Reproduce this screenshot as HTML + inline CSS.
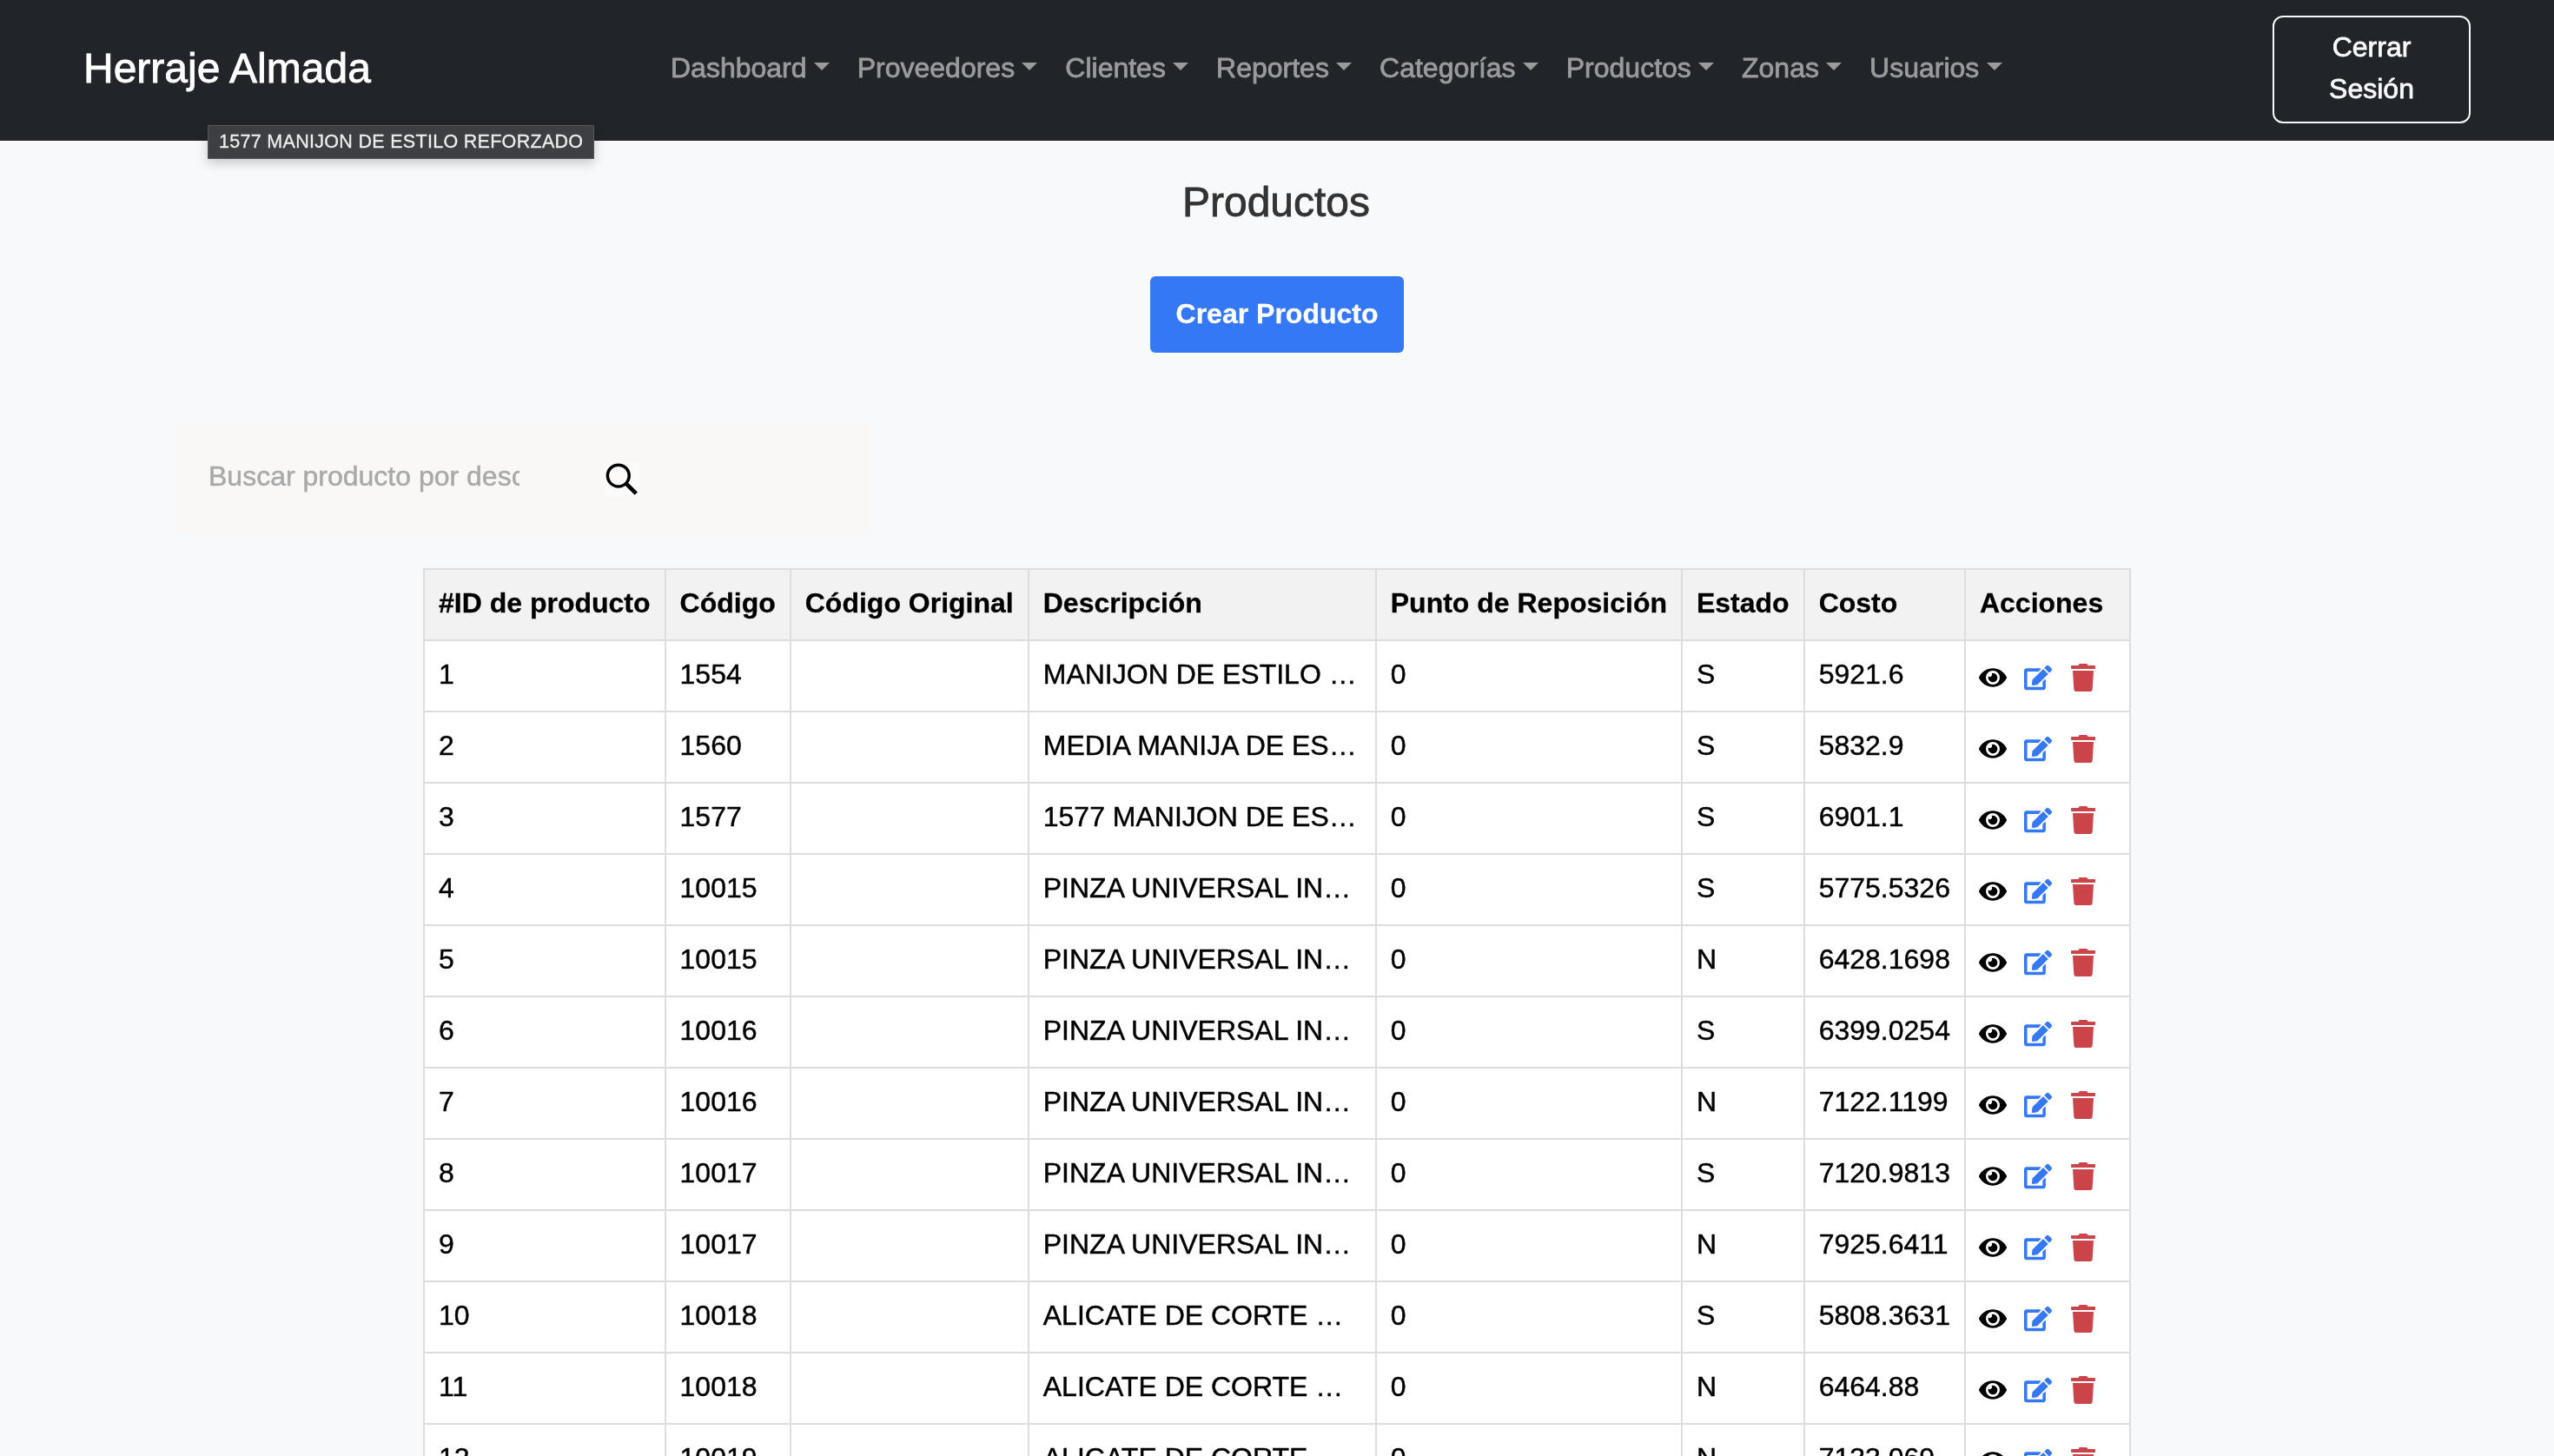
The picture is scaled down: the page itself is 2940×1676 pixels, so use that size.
<!DOCTYPE html>
<html lang="es"><head><meta charset="utf-8"><title>Herraje Almada - Productos</title>
<style>
*{box-sizing:border-box}
html,body{margin:0;padding:0}
body{width:2940px;height:1676px;overflow:hidden;background:#f8f9fa;font-family:"Liberation Sans",Arial,Helvetica,sans-serif;font-size:32px;line-height:48px;color:#000;position:relative;-webkit-text-stroke:0.8px}
nav{position:absolute;left:0;top:0;width:2940px;height:162px;background:#212529}
.brand{position:absolute;left:96px;top:43px;font-size:48px;line-height:72px;color:#fff;white-space:nowrap}
.links{position:absolute;left:756px;top:54.4px;display:flex;white-space:nowrap}
.nl{padding:0 16px;color:#9a9b9d;display:block}
.nl::after{content:"";display:inline-block;margin-left:8.16px;vertical-align:8.16px;border-top:9.6px solid;border-right:9.6px solid transparent;border-left:9.6px solid transparent;border-bottom:0}
.logout{position:absolute;left:2616px;top:18px;width:228px;height:124px;border:2px solid #f8f9fa;border-radius:12px;color:#f8f9fa;text-align:center;padding:10.4px 0 0;line-height:48px}
.tip{position:absolute;left:239px;top:144px;width:445px;height:39px;background:#3e3f43;border:1px solid #56575b;color:#eeeeee;font-size:21.5px;letter-spacing:0.3px;line-height:37px;padding-left:12px;white-space:nowrap;box-shadow:0 5px 12px rgba(0,0,0,.2);z-index:5;-webkit-text-stroke:0.3px}
h1{position:absolute;left:-1px;top:197px;width:2940px;margin:0;text-align:center;font-size:48px;line-height:72px;font-weight:400;color:#333}
.create{position:absolute;left:1324px;top:318px;width:292px;height:88px;background:#3578f6;border-radius:6px;color:#fff;font-weight:700;text-align:center;line-height:86px;-webkit-text-stroke:0.3px;white-space:nowrap}
.search{position:absolute;left:200px;top:486px;width:800px;height:128px;background:#f9f8f7;border-radius:1px}
.ph{position:absolute;left:40px;top:38px;-webkit-text-stroke:0.5px;width:358px;overflow:hidden;white-space:nowrap;color:#a9a9a9}
.sicon{position:absolute;left:496px;top:46px;width:40px;height:40px;background:conic-gradient(rgba(255,255,255,.75) 25%,transparent 0 50%,rgba(255,255,255,.75) 0 75%,transparent 0) 0 0/4px 4px}
table{position:absolute;left:487px;top:654px;border-collapse:collapse;white-space:nowrap}
th,td{border:2px solid #ddd;padding:13.5px 16px 18.5px;text-align:left;height:82px;line-height:48px}
th{background:#f2f2f2;font-weight:700;-webkit-text-stroke:0.3px}
td{background:#fff;-webkit-text-stroke:0.45px}
.desc{width:400px;max-width:400px;overflow:hidden;text-overflow:ellipsis}
.ic{width:32px;height:32px;margin-right:20px;vertical-align:middle;display:inline-block;position:relative;top:4px;left:-1px}
.acc{font-size:0}
#wrap{position:absolute;left:0;top:0;width:2940px;height:1676px;overflow:hidden;will-change:transform}
</style></head><body><div id="wrap">
<nav>
<div class="brand">Herraje Almada</div>
<div class="links"><a class="nl">Dashboard</a><a class="nl">Proveedores</a><a class="nl">Clientes</a><a class="nl">Reportes</a><a class="nl">Categorías</a><a class="nl">Productos</a><a class="nl">Zonas</a><a class="nl">Usuarios</a></div>
<div class="logout">Cerrar<br>Sesión</div>
</nav>
<div class="tip">1577 MANIJON DE ESTILO REFORZADO</div>
<h1>Productos</h1>
<div class="create">Crear Producto</div>
<div class="search"><div class="ph">Buscar producto por descripción</div>
<svg class="sicon" viewBox="0 0 40 40"><circle cx="15.8" cy="15.6" r="12.4" fill="none" stroke="#000" stroke-width="3.5"/><path d="M24 23.8L36.3 36.1" stroke="#000" stroke-width="4.7" fill="none"/></svg></div>
<table><thead><tr><th>#ID de producto</th><th>Código</th><th>Código Original</th><th>Descripción</th><th>Punto de Reposición</th><th>Estado</th><th>Costo</th><th>Acciones</th></tr></thead>
<tbody>
<tr><td>1</td><td>1554</td><td></td><td class="desc">MANIJON DE ESTILO REFORZADO</td><td>0</td><td>S</td><td>5921.6</td><td class="acc"><svg class="ic" viewBox="0 0 576 512" fill="#000"><path d="M572.52 241.4C518.29 135.59 410.93 64 288 64S57.68 135.64 3.48 241.41a32.35 32.35 0 0 0 0 29.19C57.71 376.41 165.07 448 288 448s230.32-71.64 284.52-177.41a32.35 32.35 0 0 0 0-29.19zM288 400a144 144 0 1 1 144-144 143.93 143.93 0 0 1-144 144zm0-240a95.31 95.31 0 0 0-25.31 3.79 47.85 47.85 0 0 1-66.9 66.9A95.78 95.78 0 1 0 288 160z"/></svg><svg class="ic" viewBox="0 0 576 512" fill="#3578f6"><path d="M402.6 83.2l90.2 90.2c3.8 3.8 3.8 10 0 13.8L274.4 405.600l-92.800 10.300c-12.400 1.400-22.900-9.100-21.500-21.500l10.300-92.800L388.800 83.200c3.800-3.800 10-3.800 13.800 0zm162-22.900l-48.800-48.800c-15.200-15.200-39.900-15.200-55.200 0l-35.400 35.400c-3.800 3.800-3.800 10 0 13.800l90.200 90.200c3.800 3.800 10 3.800 13.800 0l35.400-35.400c15.200-15.300 15.200-40 0-55.200zM384 346.200V448H64V128h229.800c3.200 0 6.200-1.300 8.500-3.500l40-40c7.600-7.600 2.200-20.500-8.500-20.500H48C21.500 64 0 85.500 0 112v352c0 26.500 21.500 48 48 48h352c26.500 0 48-21.500 48-48V306.200c0-10.700-12.900-16-20.500-8.500l-40 40c-2.200 2.300-3.500 5.300-3.500 8.500z"/></svg><svg class="ic" viewBox="0 0 448 512" fill="#cb444a"><path d="M432 32H312l-9.400-18.700A24 24 0 0 0 281.100 0H166.800a23.720 23.720 0 0 0-21.400 13.300L136 32H16A16 16 0 0 0 0 48v32a16 16 0 0 0 16 16h416a16 16 0 0 0 16-16V48a16 16 0 0 0-16-16zM53.200 467a48 48 0 0 0 47.900 45h245.800a48 48 0 0 0 47.900-45L416 128H32z"/></svg></td></tr>
<tr><td>2</td><td>1560</td><td></td><td class="desc">MEDIA MANIJA DE ESTILO REFORZADO</td><td>0</td><td>S</td><td>5832.9</td><td class="acc"><svg class="ic" viewBox="0 0 576 512" fill="#000"><path d="M572.52 241.4C518.29 135.59 410.93 64 288 64S57.68 135.64 3.48 241.41a32.35 32.35 0 0 0 0 29.19C57.71 376.41 165.07 448 288 448s230.32-71.64 284.52-177.41a32.35 32.35 0 0 0 0-29.19zM288 400a144 144 0 1 1 144-144 143.93 143.93 0 0 1-144 144zm0-240a95.31 95.31 0 0 0-25.31 3.79 47.85 47.85 0 0 1-66.9 66.9A95.78 95.78 0 1 0 288 160z"/></svg><svg class="ic" viewBox="0 0 576 512" fill="#3578f6"><path d="M402.6 83.2l90.2 90.2c3.8 3.8 3.8 10 0 13.8L274.4 405.600l-92.800 10.300c-12.400 1.400-22.900-9.100-21.500-21.500l10.300-92.800L388.800 83.200c3.800-3.800 10-3.800 13.800 0zm162-22.900l-48.800-48.800c-15.200-15.200-39.900-15.200-55.200 0l-35.400 35.400c-3.800 3.800-3.800 10 0 13.800l90.200 90.200c3.800 3.800 10 3.800 13.800 0l35.400-35.400c15.200-15.300 15.200-40 0-55.200zM384 346.200V448H64V128h229.800c3.200 0 6.200-1.300 8.500-3.500l40-40c7.600-7.600 2.200-20.500-8.500-20.500H48C21.500 64 0 85.500 0 112v352c0 26.500 21.500 48 48 48h352c26.500 0 48-21.500 48-48V306.200c0-10.700-12.900-16-20.500-8.500l-40 40c-2.200 2.300-3.500 5.300-3.500 8.500z"/></svg><svg class="ic" viewBox="0 0 448 512" fill="#cb444a"><path d="M432 32H312l-9.400-18.700A24 24 0 0 0 281.100 0H166.800a23.720 23.720 0 0 0-21.400 13.300L136 32H16A16 16 0 0 0 0 48v32a16 16 0 0 0 16 16h416a16 16 0 0 0 16-16V48a16 16 0 0 0-16-16zM53.200 467a48 48 0 0 0 47.900 45h245.800a48 48 0 0 0 47.900-45L416 128H32z"/></svg></td></tr>
<tr><td>3</td><td>1577</td><td></td><td class="desc">1577 MANIJON DE ESTILO REFORZADO</td><td>0</td><td>S</td><td>6901.1</td><td class="acc"><svg class="ic" viewBox="0 0 576 512" fill="#000"><path d="M572.52 241.4C518.29 135.59 410.93 64 288 64S57.68 135.64 3.48 241.41a32.35 32.35 0 0 0 0 29.19C57.71 376.41 165.07 448 288 448s230.32-71.64 284.52-177.41a32.35 32.35 0 0 0 0-29.19zM288 400a144 144 0 1 1 144-144 143.93 143.93 0 0 1-144 144zm0-240a95.31 95.31 0 0 0-25.31 3.79 47.85 47.85 0 0 1-66.9 66.9A95.78 95.78 0 1 0 288 160z"/></svg><svg class="ic" viewBox="0 0 576 512" fill="#3578f6"><path d="M402.6 83.2l90.2 90.2c3.8 3.8 3.8 10 0 13.8L274.4 405.600l-92.800 10.300c-12.400 1.400-22.900-9.100-21.500-21.500l10.300-92.800L388.800 83.200c3.800-3.800 10-3.800 13.800 0zm162-22.900l-48.800-48.800c-15.200-15.200-39.900-15.200-55.200 0l-35.400 35.400c-3.800 3.800-3.800 10 0 13.800l90.200 90.200c3.800 3.800 10 3.800 13.800 0l35.400-35.400c15.200-15.300 15.200-40 0-55.200zM384 346.200V448H64V128h229.800c3.200 0 6.200-1.300 8.500-3.500l40-40c7.600-7.600 2.200-20.500-8.500-20.500H48C21.500 64 0 85.500 0 112v352c0 26.500 21.500 48 48 48h352c26.500 0 48-21.500 48-48V306.200c0-10.700-12.900-16-20.500-8.500l-40 40c-2.200 2.300-3.500 5.300-3.500 8.500z"/></svg><svg class="ic" viewBox="0 0 448 512" fill="#cb444a"><path d="M432 32H312l-9.400-18.700A24 24 0 0 0 281.100 0H166.800a23.720 23.720 0 0 0-21.400 13.300L136 32H16A16 16 0 0 0 0 48v32a16 16 0 0 0 16 16h416a16 16 0 0 0 16-16V48a16 16 0 0 0-16-16zM53.200 467a48 48 0 0 0 47.900 45h245.800a48 48 0 0 0 47.900-45L416 128H32z"/></svg></td></tr>
<tr><td>4</td><td>10015</td><td></td><td class="desc">PINZA UNIVERSAL INDUSTRIAL 6&quot;</td><td>0</td><td>S</td><td>5775.5326</td><td class="acc"><svg class="ic" viewBox="0 0 576 512" fill="#000"><path d="M572.52 241.4C518.29 135.59 410.93 64 288 64S57.68 135.64 3.48 241.41a32.35 32.35 0 0 0 0 29.19C57.71 376.41 165.07 448 288 448s230.32-71.64 284.52-177.41a32.35 32.35 0 0 0 0-29.19zM288 400a144 144 0 1 1 144-144 143.93 143.93 0 0 1-144 144zm0-240a95.31 95.31 0 0 0-25.31 3.79 47.85 47.85 0 0 1-66.9 66.9A95.78 95.78 0 1 0 288 160z"/></svg><svg class="ic" viewBox="0 0 576 512" fill="#3578f6"><path d="M402.6 83.2l90.2 90.2c3.8 3.8 3.8 10 0 13.8L274.4 405.600l-92.800 10.300c-12.400 1.400-22.900-9.100-21.500-21.500l10.300-92.800L388.800 83.200c3.800-3.800 10-3.800 13.800 0zm162-22.900l-48.800-48.800c-15.200-15.200-39.900-15.200-55.200 0l-35.400 35.400c-3.800 3.800-3.800 10 0 13.800l90.200 90.200c3.800 3.800 10 3.800 13.800 0l35.400-35.400c15.200-15.300 15.200-40 0-55.200zM384 346.200V448H64V128h229.800c3.200 0 6.200-1.300 8.500-3.500l40-40c7.600-7.600 2.200-20.500-8.500-20.500H48C21.500 64 0 85.500 0 112v352c0 26.500 21.500 48 48 48h352c26.500 0 48-21.500 48-48V306.200c0-10.700-12.900-16-20.500-8.500l-40 40c-2.200 2.300-3.500 5.300-3.500 8.500z"/></svg><svg class="ic" viewBox="0 0 448 512" fill="#cb444a"><path d="M432 32H312l-9.400-18.700A24 24 0 0 0 281.100 0H166.800a23.720 23.720 0 0 0-21.400 13.300L136 32H16A16 16 0 0 0 0 48v32a16 16 0 0 0 16 16h416a16 16 0 0 0 16-16V48a16 16 0 0 0-16-16zM53.200 467a48 48 0 0 0 47.900 45h245.800a48 48 0 0 0 47.900-45L416 128H32z"/></svg></td></tr>
<tr><td>5</td><td>10015</td><td></td><td class="desc">PINZA UNIVERSAL INDUSTRIAL 6&quot;</td><td>0</td><td>N</td><td>6428.1698</td><td class="acc"><svg class="ic" viewBox="0 0 576 512" fill="#000"><path d="M572.52 241.4C518.29 135.59 410.93 64 288 64S57.68 135.64 3.48 241.41a32.35 32.35 0 0 0 0 29.19C57.71 376.41 165.07 448 288 448s230.32-71.64 284.52-177.41a32.35 32.35 0 0 0 0-29.19zM288 400a144 144 0 1 1 144-144 143.93 143.93 0 0 1-144 144zm0-240a95.31 95.31 0 0 0-25.31 3.79 47.85 47.85 0 0 1-66.9 66.9A95.78 95.78 0 1 0 288 160z"/></svg><svg class="ic" viewBox="0 0 576 512" fill="#3578f6"><path d="M402.6 83.2l90.2 90.2c3.8 3.8 3.8 10 0 13.8L274.4 405.600l-92.800 10.300c-12.400 1.400-22.900-9.100-21.500-21.500l10.300-92.800L388.800 83.200c3.800-3.800 10-3.800 13.800 0zm162-22.900l-48.800-48.800c-15.200-15.200-39.900-15.200-55.200 0l-35.400 35.400c-3.800 3.800-3.800 10 0 13.800l90.200 90.200c3.800 3.800 10 3.800 13.800 0l35.400-35.400c15.200-15.300 15.200-40 0-55.200zM384 346.200V448H64V128h229.800c3.200 0 6.200-1.300 8.500-3.500l40-40c7.600-7.600 2.200-20.500-8.500-20.500H48C21.500 64 0 85.500 0 112v352c0 26.500 21.500 48 48 48h352c26.500 0 48-21.500 48-48V306.200c0-10.700-12.900-16-20.500-8.500l-40 40c-2.200 2.300-3.500 5.300-3.500 8.500z"/></svg><svg class="ic" viewBox="0 0 448 512" fill="#cb444a"><path d="M432 32H312l-9.400-18.700A24 24 0 0 0 281.100 0H166.800a23.720 23.720 0 0 0-21.400 13.300L136 32H16A16 16 0 0 0 0 48v32a16 16 0 0 0 16 16h416a16 16 0 0 0 16-16V48a16 16 0 0 0-16-16zM53.200 467a48 48 0 0 0 47.900 45h245.800a48 48 0 0 0 47.900-45L416 128H32z"/></svg></td></tr>
<tr><td>6</td><td>10016</td><td></td><td class="desc">PINZA UNIVERSAL INDUSTRIAL 7&quot;</td><td>0</td><td>S</td><td>6399.0254</td><td class="acc"><svg class="ic" viewBox="0 0 576 512" fill="#000"><path d="M572.52 241.4C518.29 135.59 410.93 64 288 64S57.68 135.64 3.48 241.41a32.35 32.35 0 0 0 0 29.19C57.71 376.41 165.07 448 288 448s230.32-71.64 284.52-177.41a32.35 32.35 0 0 0 0-29.19zM288 400a144 144 0 1 1 144-144 143.93 143.93 0 0 1-144 144zm0-240a95.31 95.31 0 0 0-25.31 3.79 47.85 47.85 0 0 1-66.9 66.9A95.78 95.78 0 1 0 288 160z"/></svg><svg class="ic" viewBox="0 0 576 512" fill="#3578f6"><path d="M402.6 83.2l90.2 90.2c3.8 3.8 3.8 10 0 13.8L274.4 405.600l-92.800 10.300c-12.400 1.400-22.900-9.100-21.500-21.500l10.300-92.800L388.800 83.200c3.800-3.800 10-3.800 13.800 0zm162-22.900l-48.800-48.800c-15.200-15.200-39.900-15.200-55.200 0l-35.400 35.400c-3.800 3.800-3.800 10 0 13.800l90.200 90.200c3.800 3.800 10 3.800 13.800 0l35.400-35.400c15.200-15.300 15.200-40 0-55.200zM384 346.200V448H64V128h229.800c3.200 0 6.200-1.300 8.500-3.500l40-40c7.600-7.600 2.200-20.500-8.500-20.500H48C21.500 64 0 85.500 0 112v352c0 26.500 21.500 48 48 48h352c26.500 0 48-21.500 48-48V306.200c0-10.700-12.900-16-20.500-8.500l-40 40c-2.200 2.300-3.500 5.300-3.500 8.500z"/></svg><svg class="ic" viewBox="0 0 448 512" fill="#cb444a"><path d="M432 32H312l-9.400-18.700A24 24 0 0 0 281.100 0H166.800a23.720 23.720 0 0 0-21.400 13.300L136 32H16A16 16 0 0 0 0 48v32a16 16 0 0 0 16 16h416a16 16 0 0 0 16-16V48a16 16 0 0 0-16-16zM53.200 467a48 48 0 0 0 47.900 45h245.800a48 48 0 0 0 47.900-45L416 128H32z"/></svg></td></tr>
<tr><td>7</td><td>10016</td><td></td><td class="desc">PINZA UNIVERSAL INDUSTRIAL 7&quot;</td><td>0</td><td>N</td><td>7122.1199</td><td class="acc"><svg class="ic" viewBox="0 0 576 512" fill="#000"><path d="M572.52 241.4C518.29 135.59 410.93 64 288 64S57.68 135.64 3.48 241.41a32.35 32.35 0 0 0 0 29.19C57.71 376.41 165.07 448 288 448s230.32-71.64 284.52-177.41a32.35 32.35 0 0 0 0-29.19zM288 400a144 144 0 1 1 144-144 143.93 143.93 0 0 1-144 144zm0-240a95.31 95.31 0 0 0-25.31 3.79 47.85 47.85 0 0 1-66.9 66.9A95.78 95.78 0 1 0 288 160z"/></svg><svg class="ic" viewBox="0 0 576 512" fill="#3578f6"><path d="M402.6 83.2l90.2 90.2c3.8 3.8 3.8 10 0 13.8L274.4 405.600l-92.800 10.300c-12.400 1.400-22.900-9.100-21.500-21.500l10.300-92.800L388.800 83.200c3.800-3.800 10-3.800 13.800 0zm162-22.900l-48.800-48.800c-15.200-15.200-39.900-15.200-55.200 0l-35.400 35.400c-3.800 3.800-3.800 10 0 13.800l90.200 90.200c3.800 3.800 10 3.800 13.800 0l35.400-35.400c15.200-15.300 15.200-40 0-55.200zM384 346.200V448H64V128h229.800c3.200 0 6.200-1.300 8.500-3.500l40-40c7.600-7.600 2.200-20.500-8.500-20.500H48C21.500 64 0 85.500 0 112v352c0 26.500 21.500 48 48 48h352c26.500 0 48-21.500 48-48V306.200c0-10.700-12.900-16-20.500-8.500l-40 40c-2.200 2.300-3.500 5.300-3.500 8.500z"/></svg><svg class="ic" viewBox="0 0 448 512" fill="#cb444a"><path d="M432 32H312l-9.400-18.700A24 24 0 0 0 281.100 0H166.800a23.720 23.720 0 0 0-21.400 13.300L136 32H16A16 16 0 0 0 0 48v32a16 16 0 0 0 16 16h416a16 16 0 0 0 16-16V48a16 16 0 0 0-16-16zM53.200 467a48 48 0 0 0 47.900 45h245.800a48 48 0 0 0 47.900-45L416 128H32z"/></svg></td></tr>
<tr><td>8</td><td>10017</td><td></td><td class="desc">PINZA UNIVERSAL INDUSTRIAL 8&quot;</td><td>0</td><td>S</td><td>7120.9813</td><td class="acc"><svg class="ic" viewBox="0 0 576 512" fill="#000"><path d="M572.52 241.4C518.29 135.59 410.93 64 288 64S57.68 135.64 3.48 241.41a32.35 32.35 0 0 0 0 29.19C57.71 376.41 165.07 448 288 448s230.32-71.64 284.52-177.41a32.35 32.35 0 0 0 0-29.19zM288 400a144 144 0 1 1 144-144 143.93 143.93 0 0 1-144 144zm0-240a95.31 95.31 0 0 0-25.31 3.79 47.85 47.85 0 0 1-66.9 66.9A95.78 95.78 0 1 0 288 160z"/></svg><svg class="ic" viewBox="0 0 576 512" fill="#3578f6"><path d="M402.6 83.2l90.2 90.2c3.8 3.8 3.8 10 0 13.8L274.4 405.600l-92.800 10.300c-12.400 1.400-22.900-9.100-21.500-21.500l10.300-92.800L388.800 83.200c3.800-3.800 10-3.800 13.800 0zm162-22.900l-48.800-48.800c-15.200-15.200-39.900-15.200-55.200 0l-35.400 35.400c-3.800 3.800-3.800 10 0 13.800l90.200 90.200c3.800 3.800 10 3.800 13.800 0l35.400-35.400c15.200-15.300 15.200-40 0-55.200zM384 346.200V448H64V128h229.800c3.200 0 6.200-1.300 8.500-3.500l40-40c7.600-7.600 2.200-20.500-8.500-20.500H48C21.500 64 0 85.500 0 112v352c0 26.500 21.500 48 48 48h352c26.500 0 48-21.500 48-48V306.200c0-10.700-12.900-16-20.500-8.500l-40 40c-2.200 2.300-3.500 5.300-3.500 8.500z"/></svg><svg class="ic" viewBox="0 0 448 512" fill="#cb444a"><path d="M432 32H312l-9.400-18.700A24 24 0 0 0 281.100 0H166.800a23.720 23.720 0 0 0-21.400 13.300L136 32H16A16 16 0 0 0 0 48v32a16 16 0 0 0 16 16h416a16 16 0 0 0 16-16V48a16 16 0 0 0-16-16zM53.200 467a48 48 0 0 0 47.900 45h245.800a48 48 0 0 0 47.900-45L416 128H32z"/></svg></td></tr>
<tr><td>9</td><td>10017</td><td></td><td class="desc">PINZA UNIVERSAL INDUSTRIAL 8&quot;</td><td>0</td><td>N</td><td>7925.6411</td><td class="acc"><svg class="ic" viewBox="0 0 576 512" fill="#000"><path d="M572.52 241.4C518.29 135.59 410.93 64 288 64S57.68 135.64 3.48 241.41a32.35 32.35 0 0 0 0 29.19C57.71 376.41 165.07 448 288 448s230.32-71.64 284.52-177.41a32.35 32.35 0 0 0 0-29.19zM288 400a144 144 0 1 1 144-144 143.93 143.93 0 0 1-144 144zm0-240a95.31 95.31 0 0 0-25.31 3.79 47.85 47.85 0 0 1-66.9 66.9A95.78 95.78 0 1 0 288 160z"/></svg><svg class="ic" viewBox="0 0 576 512" fill="#3578f6"><path d="M402.6 83.2l90.2 90.2c3.8 3.8 3.8 10 0 13.8L274.4 405.600l-92.800 10.300c-12.400 1.400-22.900-9.100-21.500-21.500l10.300-92.800L388.800 83.200c3.800-3.800 10-3.800 13.800 0zm162-22.900l-48.800-48.800c-15.200-15.200-39.900-15.200-55.200 0l-35.400 35.400c-3.800 3.800-3.800 10 0 13.800l90.200 90.200c3.800 3.800 10 3.800 13.800 0l35.400-35.400c15.200-15.300 15.200-40 0-55.200zM384 346.200V448H64V128h229.800c3.200 0 6.200-1.300 8.500-3.500l40-40c7.600-7.600 2.200-20.500-8.500-20.500H48C21.500 64 0 85.500 0 112v352c0 26.500 21.500 48 48 48h352c26.500 0 48-21.500 48-48V306.200c0-10.700-12.900-16-20.500-8.500l-40 40c-2.200 2.300-3.500 5.300-3.500 8.500z"/></svg><svg class="ic" viewBox="0 0 448 512" fill="#cb444a"><path d="M432 32H312l-9.400-18.700A24 24 0 0 0 281.100 0H166.800a23.720 23.720 0 0 0-21.400 13.300L136 32H16A16 16 0 0 0 0 48v32a16 16 0 0 0 16 16h416a16 16 0 0 0 16-16V48a16 16 0 0 0-16-16zM53.200 467a48 48 0 0 0 47.900 45h245.800a48 48 0 0 0 47.900-45L416 128H32z"/></svg></td></tr>
<tr><td>10</td><td>10018</td><td></td><td class="desc">ALICATE DE CORTE OBLICUO 6&quot;</td><td>0</td><td>S</td><td>5808.3631</td><td class="acc"><svg class="ic" viewBox="0 0 576 512" fill="#000"><path d="M572.52 241.4C518.29 135.59 410.93 64 288 64S57.68 135.64 3.48 241.41a32.35 32.35 0 0 0 0 29.19C57.71 376.41 165.07 448 288 448s230.32-71.64 284.52-177.41a32.35 32.35 0 0 0 0-29.19zM288 400a144 144 0 1 1 144-144 143.93 143.93 0 0 1-144 144zm0-240a95.31 95.31 0 0 0-25.31 3.79 47.85 47.85 0 0 1-66.9 66.9A95.78 95.78 0 1 0 288 160z"/></svg><svg class="ic" viewBox="0 0 576 512" fill="#3578f6"><path d="M402.6 83.2l90.2 90.2c3.8 3.8 3.8 10 0 13.8L274.4 405.600l-92.800 10.300c-12.400 1.400-22.900-9.100-21.500-21.500l10.300-92.800L388.800 83.200c3.800-3.800 10-3.800 13.800 0zm162-22.900l-48.800-48.800c-15.200-15.200-39.900-15.200-55.200 0l-35.400 35.400c-3.800 3.800-3.800 10 0 13.800l90.200 90.200c3.800 3.800 10 3.800 13.800 0l35.400-35.400c15.200-15.300 15.200-40 0-55.200zM384 346.200V448H64V128h229.800c3.200 0 6.200-1.300 8.500-3.500l40-40c7.600-7.600 2.200-20.500-8.500-20.500H48C21.500 64 0 85.500 0 112v352c0 26.500 21.500 48 48 48h352c26.500 0 48-21.500 48-48V306.200c0-10.700-12.900-16-20.500-8.500l-40 40c-2.200 2.300-3.500 5.300-3.500 8.500z"/></svg><svg class="ic" viewBox="0 0 448 512" fill="#cb444a"><path d="M432 32H312l-9.400-18.700A24 24 0 0 0 281.100 0H166.800a23.720 23.720 0 0 0-21.400 13.300L136 32H16A16 16 0 0 0 0 48v32a16 16 0 0 0 16 16h416a16 16 0 0 0 16-16V48a16 16 0 0 0-16-16zM53.200 467a48 48 0 0 0 47.900 45h245.800a48 48 0 0 0 47.900-45L416 128H32z"/></svg></td></tr>
<tr><td>11</td><td>10018</td><td></td><td class="desc">ALICATE DE CORTE OBLICUO 6&quot;</td><td>0</td><td>N</td><td>6464.88</td><td class="acc"><svg class="ic" viewBox="0 0 576 512" fill="#000"><path d="M572.52 241.4C518.29 135.59 410.93 64 288 64S57.68 135.64 3.48 241.41a32.35 32.35 0 0 0 0 29.19C57.71 376.41 165.07 448 288 448s230.32-71.64 284.52-177.41a32.35 32.35 0 0 0 0-29.19zM288 400a144 144 0 1 1 144-144 143.93 143.93 0 0 1-144 144zm0-240a95.31 95.31 0 0 0-25.31 3.79 47.85 47.85 0 0 1-66.9 66.9A95.78 95.78 0 1 0 288 160z"/></svg><svg class="ic" viewBox="0 0 576 512" fill="#3578f6"><path d="M402.6 83.2l90.2 90.2c3.8 3.8 3.8 10 0 13.8L274.4 405.600l-92.800 10.300c-12.400 1.400-22.900-9.100-21.500-21.500l10.300-92.800L388.800 83.200c3.800-3.800 10-3.800 13.800 0zm162-22.900l-48.800-48.800c-15.200-15.200-39.900-15.200-55.200 0l-35.400 35.400c-3.800 3.800-3.800 10 0 13.800l90.200 90.200c3.800 3.800 10 3.800 13.800 0l35.400-35.400c15.200-15.300 15.200-40 0-55.200zM384 346.200V448H64V128h229.800c3.200 0 6.200-1.300 8.500-3.500l40-40c7.600-7.600 2.200-20.500-8.500-20.500H48C21.500 64 0 85.500 0 112v352c0 26.500 21.500 48 48 48h352c26.500 0 48-21.500 48-48V306.200c0-10.700-12.900-16-20.500-8.500l-40 40c-2.200 2.300-3.500 5.300-3.500 8.500z"/></svg><svg class="ic" viewBox="0 0 448 512" fill="#cb444a"><path d="M432 32H312l-9.400-18.700A24 24 0 0 0 281.100 0H166.800a23.720 23.720 0 0 0-21.400 13.300L136 32H16A16 16 0 0 0 0 48v32a16 16 0 0 0 16 16h416a16 16 0 0 0 16-16V48a16 16 0 0 0-16-16zM53.200 467a48 48 0 0 0 47.900 45h245.800a48 48 0 0 0 47.900-45L416 128H32z"/></svg></td></tr>
<tr><td>12</td><td>10019</td><td></td><td class="desc">ALICATE DE CORTE OBLICUO 7&quot;</td><td>0</td><td>N</td><td>7133.069</td><td class="acc"><svg class="ic" viewBox="0 0 576 512" fill="#000"><path d="M572.52 241.4C518.29 135.59 410.93 64 288 64S57.68 135.64 3.48 241.41a32.35 32.35 0 0 0 0 29.19C57.71 376.41 165.07 448 288 448s230.32-71.64 284.52-177.41a32.35 32.35 0 0 0 0-29.19zM288 400a144 144 0 1 1 144-144 143.93 143.93 0 0 1-144 144zm0-240a95.31 95.31 0 0 0-25.31 3.79 47.85 47.85 0 0 1-66.9 66.9A95.78 95.78 0 1 0 288 160z"/></svg><svg class="ic" viewBox="0 0 576 512" fill="#3578f6"><path d="M402.6 83.2l90.2 90.2c3.8 3.8 3.8 10 0 13.8L274.4 405.600l-92.800 10.300c-12.400 1.400-22.900-9.100-21.500-21.500l10.300-92.800L388.800 83.200c3.800-3.800 10-3.800 13.800 0zm162-22.900l-48.800-48.800c-15.200-15.200-39.900-15.200-55.200 0l-35.400 35.400c-3.800 3.800-3.800 10 0 13.800l90.200 90.200c3.800 3.800 10 3.800 13.800 0l35.400-35.400c15.200-15.300 15.200-40 0-55.200zM384 346.200V448H64V128h229.800c3.200 0 6.200-1.300 8.500-3.500l40-40c7.600-7.600 2.200-20.500-8.500-20.500H48C21.500 64 0 85.500 0 112v352c0 26.500 21.500 48 48 48h352c26.500 0 48-21.500 48-48V306.200c0-10.700-12.900-16-20.500-8.500l-40 40c-2.200 2.300-3.500 5.300-3.500 8.500z"/></svg><svg class="ic" viewBox="0 0 448 512" fill="#cb444a"><path d="M432 32H312l-9.400-18.700A24 24 0 0 0 281.100 0H166.800a23.720 23.720 0 0 0-21.400 13.300L136 32H16A16 16 0 0 0 0 48v32a16 16 0 0 0 16 16h416a16 16 0 0 0 16-16V48a16 16 0 0 0-16-16zM53.200 467a48 48 0 0 0 47.900 45h245.800a48 48 0 0 0 47.900-45L416 128H32z"/></svg></td></tr>
</tbody></table>
</div></body></html>
